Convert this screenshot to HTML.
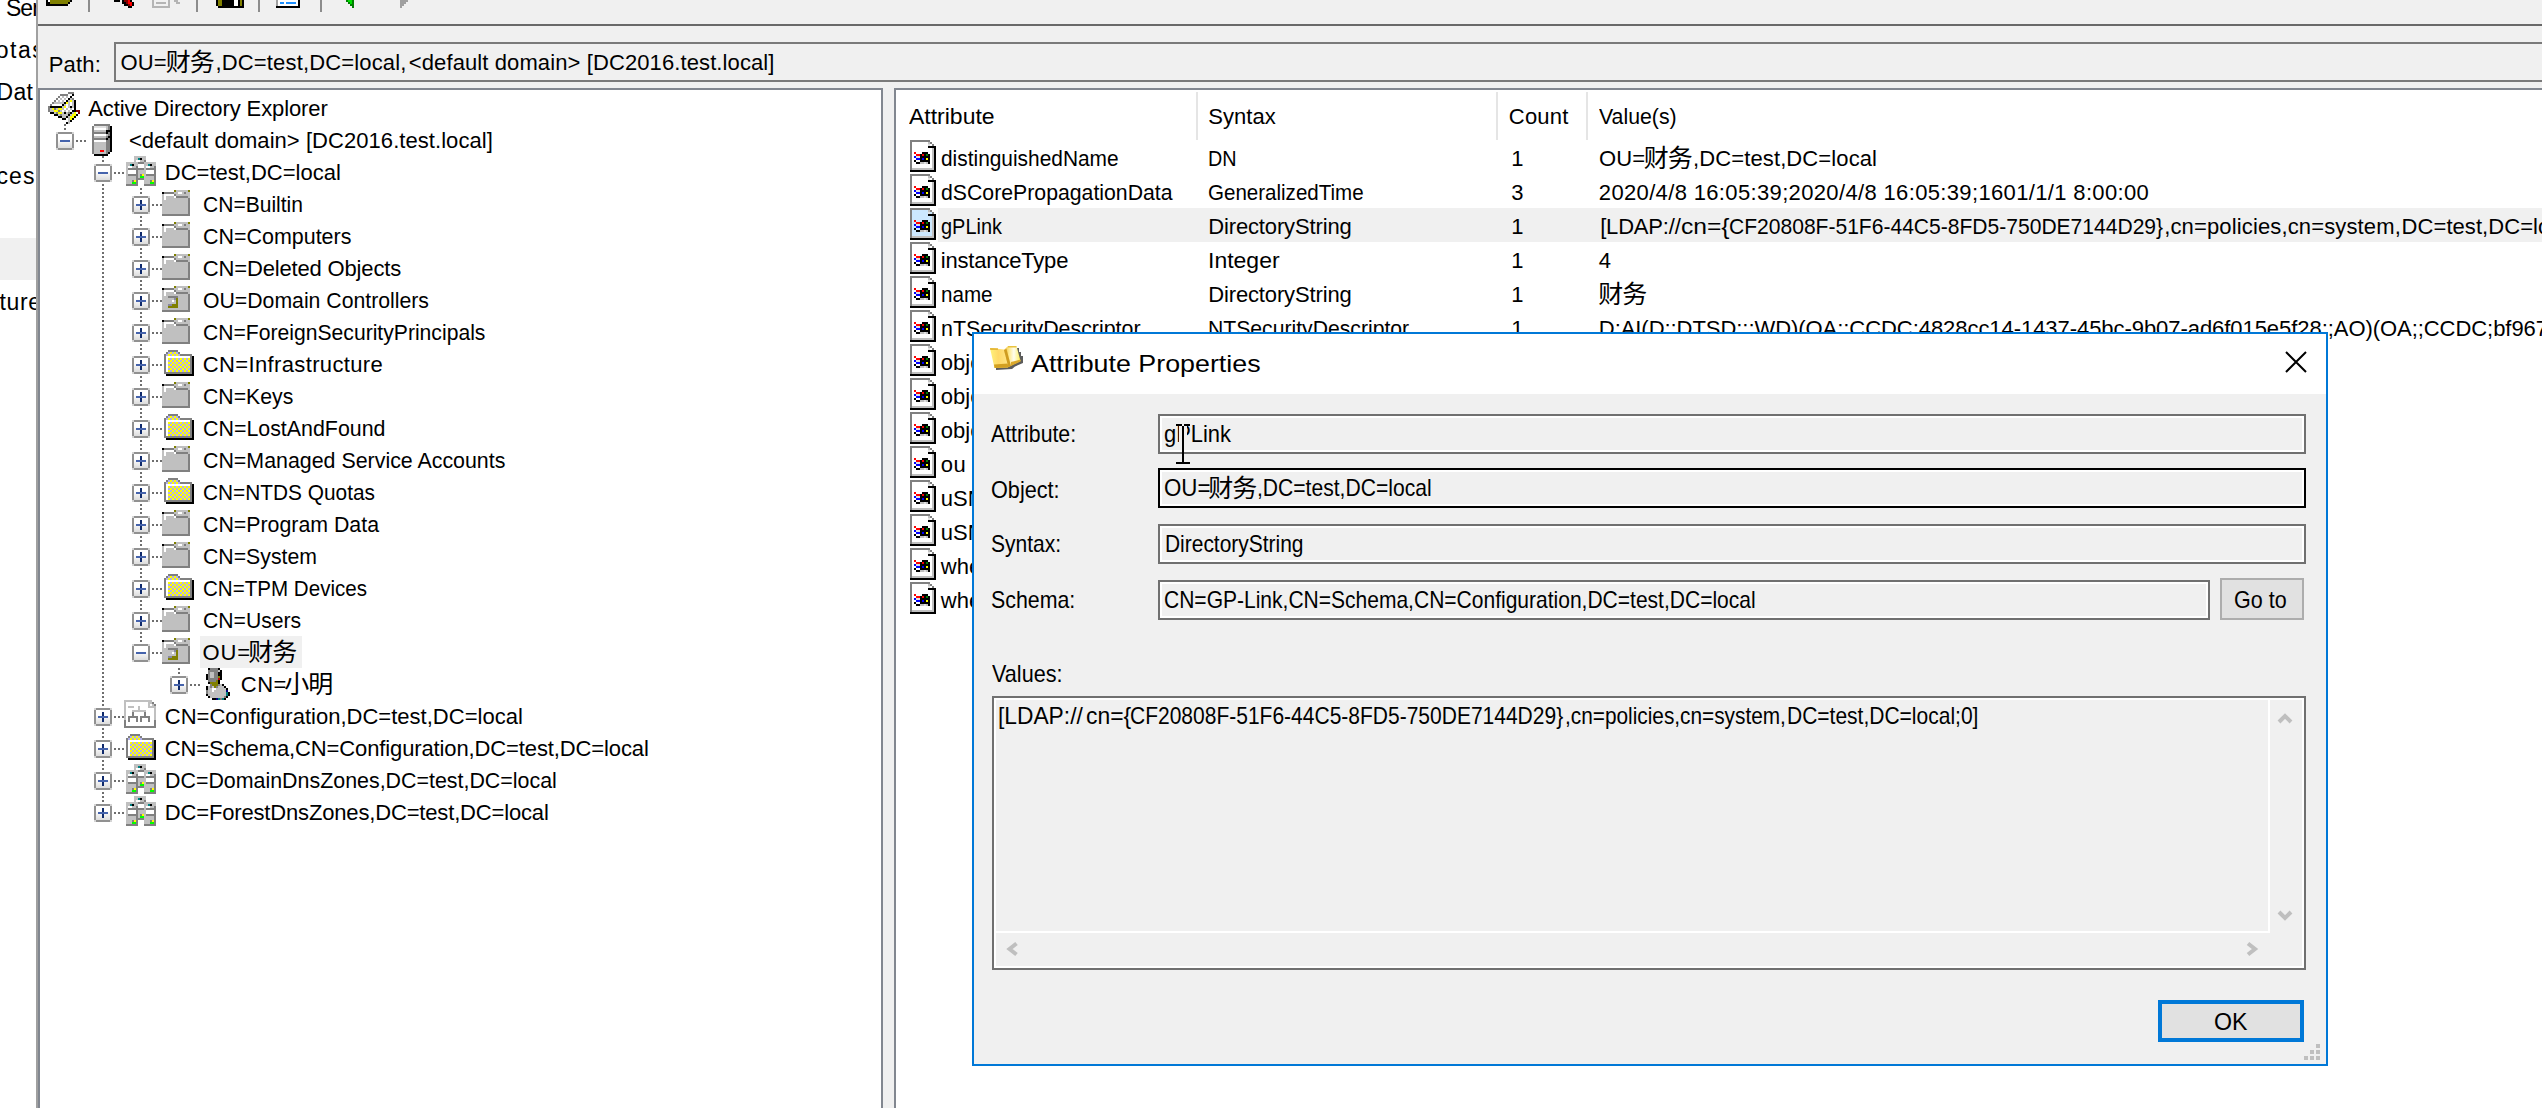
<!DOCTYPE html><html><head><meta charset="utf-8"><title>Active Directory Explorer</title><style>
html,body{margin:0;padding:0}
body{width:2542px;height:1108px;overflow:hidden;background:#fff;position:relative;font-family:'Liberation Sans','Noto Sans CJK SC',sans-serif;font-size:22px;color:#000}
.cj{font-family:'Liberation Sans','Noto Sans CJK SC',sans-serif;font-size:25px;letter-spacing:-1px}
.t{position:absolute;white-space:pre;line-height:32px;height:32px;transform-origin:0 0}
.ic{position:absolute;shape-rendering:crispEdges}
.ab{position:absolute}
.bx{position:absolute;width:14px;height:14px;border:2px solid #919191;background:linear-gradient(#fff,#fff 35%,#dcdcdc);box-sizing:content-box}
.bx i{position:absolute;display:block}
.bx .h{left:2px;top:6px;width:10px;height:2px;background:#4563ac}
.bx .v{left:6px;top:2px;width:2px;height:10px;background:#0f2a6b}
.bx .c{width:2px;height:2px;background:#d4d4d4}
.vd{position:absolute;width:2px;background:repeating-linear-gradient(to bottom,#6e6e6e 0,#6e6e6e 2px,transparent 2px,transparent 4px)}
.hd{position:absolute;height:2px;background:repeating-linear-gradient(to right,#6e6e6e 0,#6e6e6e 2px,transparent 2px,transparent 4px)}
.fld{position:absolute;box-sizing:border-box;border:2px solid #707070;background:#f0f0f0;box-shadow:inset 0 0 0 2px #fff}
</style></head><body>
<svg width="0" height="0" style="position:absolute"><defs><symbol id="i-adexp" viewBox="0 0 32 32"><rect x="20" y="0" width="6" height="2" fill="#808080"/><rect x="12" y="2" width="8" height="2" fill="#808080"/><rect x="20" y="2" width="4" height="2" fill="#ffffff"/><rect x="24" y="2" width="2" height="2" fill="#000000"/><rect x="10" y="4" width="2" height="2" fill="#808080"/><rect x="12" y="4" width="2" height="2" fill="#ffffff"/><rect x="14" y="4" width="2" height="2" fill="#c0c0c0"/><rect x="16" y="4" width="2" height="2" fill="#ffffff"/><rect x="18" y="4" width="2" height="2" fill="#c0c0c0"/><rect x="20" y="4" width="2" height="2" fill="#ffffff"/><rect x="22" y="4" width="2" height="2" fill="#000000"/><rect x="8" y="6" width="2" height="2" fill="#808080"/><rect x="10" y="6" width="2" height="2" fill="#ffffff"/><rect x="12" y="6" width="2" height="2" fill="#c0c0c0"/><rect x="14" y="6" width="2" height="2" fill="#ffffff"/><rect x="16" y="6" width="2" height="2" fill="#c0c0c0"/><rect x="18" y="6" width="2" height="2" fill="#ffffff"/><rect x="20" y="6" width="2" height="2" fill="#000000"/><rect x="22" y="6" width="2" height="2" fill="#c0c0c0"/><rect x="24" y="6" width="2" height="2" fill="#808080"/><rect x="6" y="8" width="2" height="2" fill="#808080"/><rect x="8" y="8" width="2" height="2" fill="#ffffff"/><rect x="10" y="8" width="2" height="2" fill="#c0c0c0"/><rect x="12" y="8" width="2" height="2" fill="#ffffff"/><rect x="14" y="8" width="2" height="2" fill="#c0c0c0"/><rect x="16" y="8" width="2" height="2" fill="#ffffff"/><rect x="18" y="8" width="2" height="2" fill="#000000"/><rect x="20" y="8" width="2" height="2" fill="#c0c0c0"/><rect x="22" y="8" width="2" height="2" fill="#ffff00"/><rect x="24" y="8" width="2" height="2" fill="#c0c0c0"/><rect x="26" y="8" width="2" height="2" fill="#000000"/><rect x="4" y="10" width="2" height="2" fill="#808080"/><rect x="6" y="10" width="10" height="2" fill="#c0c0c0"/><rect x="16" y="10" width="2" height="2" fill="#000000"/><rect x="18" y="10" width="2" height="2" fill="#ffff00"/><rect x="20" y="10" width="2" height="2" fill="#c0c0c0"/><rect x="22" y="10" width="2" height="2" fill="#ffffff"/><rect x="24" y="10" width="2" height="2" fill="#c0c0c0"/><rect x="26" y="10" width="2" height="2" fill="#000000"/><rect x="2" y="12" width="2" height="2" fill="#808080"/><rect x="4" y="12" width="10" height="2" fill="#ffffff"/><rect x="14" y="12" width="2" height="2" fill="#000000"/><rect x="16" y="12" width="2" height="2" fill="#c0c0c0"/><rect x="18" y="12" width="2" height="2" fill="#ffffff"/><rect x="20" y="12" width="2" height="2" fill="#c0c0c0"/><rect x="22" y="12" width="2" height="2" fill="#ffffff"/><rect x="24" y="12" width="2" height="2" fill="#c0c0c0"/><rect x="26" y="12" width="2" height="2" fill="#000000"/><rect x="0" y="14" width="2" height="2" fill="#808080"/><rect x="2" y="14" width="12" height="2" fill="#000000"/><rect x="14" y="14" width="2" height="2" fill="#c0c0c0"/><rect x="16" y="14" width="2" height="2" fill="#ffff00"/><rect x="18" y="14" width="2" height="2" fill="#ffffff"/><rect x="20" y="14" width="2" height="2" fill="#c0c0c0"/><rect x="22" y="14" width="2" height="2" fill="#000000"/><rect x="24" y="14" width="2" height="2" fill="#c0c0c0"/><rect x="26" y="14" width="2" height="2" fill="#000000"/><rect x="0" y="16" width="2" height="2" fill="#808080"/><rect x="2" y="16" width="2" height="2" fill="#c0c0c0"/><rect x="4" y="16" width="2" height="2" fill="#ffff00"/><rect x="6" y="16" width="2" height="2" fill="#808080"/><rect x="8" y="16" width="2" height="2" fill="#c0c0c0"/><rect x="10" y="16" width="4" height="2" fill="#ffff00"/><rect x="14" y="16" width="2" height="2" fill="#c0c0c0"/><rect x="16" y="16" width="2" height="2" fill="#ffffff"/><rect x="18" y="16" width="2" height="2" fill="#c0c0c0"/><rect x="20" y="16" width="2" height="2" fill="#ffffff"/><rect x="22" y="16" width="2" height="2" fill="#c0c0c0"/><rect x="24" y="16" width="2" height="2" fill="#ffffff"/><rect x="26" y="16" width="2" height="2" fill="#000000"/><rect x="0" y="18" width="2" height="2" fill="#808080"/><rect x="2" y="18" width="4" height="2" fill="#c0c0c0"/><rect x="6" y="18" width="4" height="2" fill="#ffff00"/><rect x="10" y="18" width="2" height="2" fill="#808080"/><rect x="12" y="18" width="2" height="2" fill="#c0c0c0"/><rect x="14" y="18" width="2" height="2" fill="#ffffff"/><rect x="16" y="18" width="2" height="2" fill="#c0c0c0"/><rect x="18" y="18" width="2" height="2" fill="#ffffff"/><rect x="20" y="18" width="2" height="2" fill="#c0c0c0"/><rect x="22" y="18" width="2" height="2" fill="#ffffff"/><rect x="24" y="18" width="4" height="2" fill="#000000"/><rect x="28" y="18" width="4" height="2" fill="#800000"/><rect x="2" y="20" width="4" height="2" fill="#000000"/><rect x="6" y="20" width="2" height="2" fill="#c0c0c0"/><rect x="8" y="20" width="2" height="2" fill="#808080"/><rect x="10" y="20" width="4" height="2" fill="#ffff00"/><rect x="14" y="20" width="2" height="2" fill="#c0c0c0"/><rect x="16" y="20" width="2" height="2" fill="#000000"/><rect x="18" y="20" width="2" height="2" fill="#c0c0c0"/><rect x="20" y="20" width="2" height="2" fill="#808080"/><rect x="22" y="20" width="2" height="2" fill="#000000"/><rect x="24" y="20" width="2" height="2" fill="#c0c0c0"/><rect x="26" y="20" width="2" height="2" fill="#ffff00"/><rect x="28" y="20" width="2" height="2" fill="#ffffff"/><rect x="30" y="20" width="2" height="2" fill="#800000"/><rect x="6" y="22" width="4" height="2" fill="#000000"/><rect x="10" y="22" width="2" height="2" fill="#c0c0c0"/><rect x="12" y="22" width="2" height="2" fill="#808080"/><rect x="14" y="22" width="6" height="2" fill="#c0c0c0"/><rect x="20" y="22" width="2" height="2" fill="#000000"/><rect x="22" y="22" width="2" height="2" fill="#c0c0c0"/><rect x="24" y="22" width="4" height="2" fill="#ffff00"/><rect x="28" y="22" width="2" height="2" fill="#000000"/><rect x="10" y="24" width="4" height="2" fill="#000000"/><rect x="14" y="24" width="4" height="2" fill="#c0c0c0"/><rect x="18" y="24" width="2" height="2" fill="#000000"/><rect x="20" y="24" width="2" height="2" fill="#c0c0c0"/><rect x="22" y="24" width="4" height="2" fill="#ffff00"/><rect x="26" y="24" width="2" height="2" fill="#000000"/><rect x="14" y="26" width="4" height="2" fill="#000000"/><rect x="18" y="26" width="2" height="2" fill="#ffffff"/><rect x="20" y="26" width="2" height="2" fill="#c0c0c0"/><rect x="22" y="26" width="2" height="2" fill="#ffff00"/><rect x="24" y="26" width="2" height="2" fill="#000000"/><rect x="18" y="28" width="2" height="2" fill="#ffffff"/><rect x="20" y="28" width="2" height="2" fill="#c0c0c0"/><rect x="22" y="28" width="2" height="2" fill="#000000"/><rect x="18" y="30" width="2" height="2" fill="#000000"/><rect x="20" y="30" width="2" height="2" fill="#c0c0c0"/></symbol><symbol id="i-server" viewBox="0 0 20 32"><rect x="2" y="0" width="16" height="2" fill="#808080"/><rect x="0" y="2" width="2" height="2" fill="#808080"/><rect x="2" y="2" width="12" height="2" fill="#e0e0e0"/><rect x="14" y="2" width="2" height="2" fill="#c0c0c0"/><rect x="16" y="2" width="2" height="2" fill="#808080"/><rect x="18" y="2" width="2" height="2" fill="#000000"/><rect x="0" y="4" width="2" height="2" fill="#808080"/><rect x="2" y="4" width="12" height="2" fill="#ffffff"/><rect x="14" y="4" width="2" height="2" fill="#c0c0c0"/><rect x="16" y="4" width="2" height="2" fill="#808080"/><rect x="18" y="4" width="2" height="2" fill="#000000"/><rect x="0" y="6" width="2" height="2" fill="#808080"/><rect x="2" y="6" width="12" height="2" fill="#c0c0c0"/><rect x="14" y="6" width="6" height="2" fill="#000000"/><rect x="0" y="8" width="14" height="2" fill="#808080"/><rect x="14" y="8" width="2" height="2" fill="#000000"/><rect x="16" y="8" width="2" height="2" fill="#808080"/><rect x="18" y="8" width="2" height="2" fill="#000000"/><rect x="0" y="10" width="2" height="2" fill="#808080"/><rect x="2" y="10" width="12" height="2" fill="#ffffff"/><rect x="14" y="10" width="2" height="2" fill="#c0c0c0"/><rect x="16" y="10" width="2" height="2" fill="#808080"/><rect x="18" y="10" width="2" height="2" fill="#000000"/><rect x="0" y="12" width="2" height="2" fill="#808080"/><rect x="2" y="12" width="12" height="2" fill="#c0c0c0"/><rect x="14" y="12" width="2" height="2" fill="#808080"/><rect x="16" y="12" width="4" height="2" fill="#000000"/><rect x="0" y="14" width="14" height="2" fill="#808080"/><rect x="14" y="14" width="2" height="2" fill="#000000"/><rect x="16" y="14" width="2" height="2" fill="#808080"/><rect x="18" y="14" width="2" height="2" fill="#000000"/><rect x="0" y="16" width="2" height="2" fill="#808080"/><rect x="2" y="16" width="12" height="2" fill="#ffffff"/><rect x="14" y="16" width="4" height="2" fill="#808080"/><rect x="18" y="16" width="2" height="2" fill="#000000"/><rect x="0" y="18" width="2" height="2" fill="#808080"/><rect x="2" y="18" width="12" height="2" fill="#c0c0c0"/><rect x="14" y="18" width="4" height="2" fill="#808080"/><rect x="18" y="18" width="2" height="2" fill="#000000"/><rect x="0" y="20" width="2" height="2" fill="#808080"/><rect x="2" y="20" width="12" height="2" fill="#c0c0c0"/><rect x="14" y="20" width="4" height="2" fill="#808080"/><rect x="18" y="20" width="2" height="2" fill="#000000"/><rect x="0" y="22" width="2" height="2" fill="#808080"/><rect x="2" y="22" width="12" height="2" fill="#c0c0c0"/><rect x="14" y="22" width="4" height="2" fill="#808080"/><rect x="18" y="22" width="2" height="2" fill="#000000"/><rect x="0" y="24" width="2" height="2" fill="#808080"/><rect x="2" y="24" width="12" height="2" fill="#c0c0c0"/><rect x="14" y="24" width="4" height="2" fill="#808080"/><rect x="18" y="24" width="2" height="2" fill="#000000"/><rect x="0" y="26" width="2" height="2" fill="#808080"/><rect x="2" y="26" width="6" height="2" fill="#c0c0c0"/><rect x="8" y="26" width="4" height="2" fill="#ff0000"/><rect x="12" y="26" width="2" height="2" fill="#c0c0c0"/><rect x="14" y="26" width="4" height="2" fill="#808080"/><rect x="18" y="26" width="2" height="2" fill="#000000"/><rect x="0" y="28" width="2" height="2" fill="#808080"/><rect x="2" y="28" width="12" height="2" fill="#c0c0c0"/><rect x="14" y="28" width="2" height="2" fill="#808080"/><rect x="16" y="28" width="2" height="2" fill="#000000"/><rect x="2" y="30" width="14" height="2" fill="#000000"/></symbol><symbol id="i-domain" viewBox="0 0 30 30"><rect x="8" y="0" width="12" height="2" fill="#c0c0c0"/><rect x="8" y="2" width="4" height="2" fill="#c0c0c0"/><rect x="12" y="2" width="2" height="2" fill="#008080"/><rect x="14" y="2" width="2" height="2" fill="#000000"/><rect x="16" y="2" width="4" height="2" fill="#c0c0c0"/><rect x="8" y="4" width="2" height="2" fill="#c0c0c0"/><rect x="10" y="4" width="4" height="2" fill="#ffffff"/><rect x="14" y="4" width="4" height="2" fill="#c0c0c0"/><rect x="18" y="4" width="2" height="2" fill="#808080"/><rect x="0" y="6" width="12" height="2" fill="#c0c0c0"/><rect x="12" y="6" width="6" height="2" fill="#808080"/><rect x="18" y="6" width="12" height="2" fill="#c0c0c0"/><rect x="0" y="8" width="4" height="2" fill="#c0c0c0"/><rect x="4" y="8" width="2" height="2" fill="#008080"/><rect x="6" y="8" width="2" height="2" fill="#000000"/><rect x="8" y="8" width="4" height="2" fill="#c0c0c0"/><rect x="12" y="8" width="6" height="2" fill="#ffffff"/><rect x="18" y="8" width="4" height="2" fill="#c0c0c0"/><rect x="22" y="8" width="2" height="2" fill="#008080"/><rect x="24" y="8" width="2" height="2" fill="#000000"/><rect x="26" y="8" width="4" height="2" fill="#c0c0c0"/><rect x="0" y="10" width="2" height="2" fill="#c0c0c0"/><rect x="2" y="10" width="4" height="2" fill="#ffffff"/><rect x="6" y="10" width="4" height="2" fill="#c0c0c0"/><rect x="10" y="10" width="2" height="2" fill="#808080"/><rect x="12" y="10" width="6" height="2" fill="#ffffff"/><rect x="18" y="10" width="2" height="2" fill="#c0c0c0"/><rect x="20" y="10" width="4" height="2" fill="#ffffff"/><rect x="24" y="10" width="4" height="2" fill="#c0c0c0"/><rect x="28" y="10" width="2" height="2" fill="#808080"/><rect x="0" y="12" width="2" height="2" fill="#c0c0c0"/><rect x="2" y="12" width="16" height="2" fill="#808080"/><rect x="18" y="12" width="2" height="2" fill="#c0c0c0"/><rect x="20" y="12" width="10" height="2" fill="#808080"/><rect x="0" y="14" width="2" height="2" fill="#c0c0c0"/><rect x="2" y="14" width="8" height="2" fill="#ffffff"/><rect x="10" y="14" width="2" height="2" fill="#808080"/><rect x="12" y="14" width="8" height="2" fill="#c0c0c0"/><rect x="20" y="14" width="8" height="2" fill="#ffffff"/><rect x="28" y="14" width="2" height="2" fill="#808080"/><rect x="0" y="16" width="2" height="2" fill="#c0c0c0"/><rect x="2" y="16" width="8" height="2" fill="#ffffff"/><rect x="10" y="16" width="2" height="2" fill="#808080"/><rect x="12" y="16" width="8" height="2" fill="#c0c0c0"/><rect x="20" y="16" width="8" height="2" fill="#ffffff"/><rect x="28" y="16" width="2" height="2" fill="#808080"/><rect x="0" y="18" width="2" height="2" fill="#c0c0c0"/><rect x="2" y="18" width="10" height="2" fill="#808080"/><rect x="12" y="18" width="2" height="2" fill="#c0c0c0"/><rect x="14" y="18" width="2" height="2" fill="#808080"/><rect x="16" y="18" width="2" height="2" fill="#ffff00"/><rect x="18" y="18" width="2" height="2" fill="#c0c0c0"/><rect x="20" y="18" width="10" height="2" fill="#808080"/><rect x="0" y="20" width="10" height="2" fill="#c0c0c0"/><rect x="10" y="20" width="2" height="2" fill="#808080"/><rect x="12" y="20" width="2" height="2" fill="#c0c0c0"/><rect x="14" y="20" width="4" height="2" fill="#00ff00"/><rect x="18" y="20" width="10" height="2" fill="#c0c0c0"/><rect x="28" y="20" width="2" height="2" fill="#808080"/><rect x="0" y="22" width="10" height="2" fill="#c0c0c0"/><rect x="10" y="22" width="8" height="2" fill="#808080"/><rect x="18" y="22" width="10" height="2" fill="#c0c0c0"/><rect x="28" y="22" width="2" height="2" fill="#808080"/><rect x="0" y="24" width="6" height="2" fill="#c0c0c0"/><rect x="6" y="24" width="2" height="2" fill="#808080"/><rect x="8" y="24" width="2" height="2" fill="#ffff00"/><rect x="10" y="24" width="2" height="2" fill="#808080"/><rect x="18" y="24" width="6" height="2" fill="#c0c0c0"/><rect x="24" y="24" width="2" height="2" fill="#808080"/><rect x="26" y="24" width="2" height="2" fill="#ffff00"/><rect x="28" y="24" width="2" height="2" fill="#808080"/><rect x="0" y="26" width="6" height="2" fill="#c0c0c0"/><rect x="6" y="26" width="4" height="2" fill="#00ff00"/><rect x="10" y="26" width="2" height="2" fill="#808080"/><rect x="18" y="26" width="6" height="2" fill="#c0c0c0"/><rect x="24" y="26" width="4" height="2" fill="#00ff00"/><rect x="28" y="26" width="2" height="2" fill="#808080"/><rect x="0" y="28" width="12" height="2" fill="#808080"/><rect x="18" y="28" width="12" height="2" fill="#808080"/></symbol><symbol id="i-gfolder" viewBox="0 0 28 26"><rect x="12" y="0" width="2" height="2" fill="#808000"/><rect x="14" y="0" width="12" height="2" fill="#c0c0c0"/><rect x="26" y="0" width="2" height="2" fill="#808000"/><rect x="0" y="2" width="2" height="2" fill="#000000"/><rect x="2" y="2" width="10" height="2" fill="#808080"/><rect x="12" y="2" width="4" height="2" fill="#c0c0c0"/><rect x="16" y="2" width="4" height="2" fill="#ffffff"/><rect x="20" y="2" width="2" height="2" fill="#c0c0c0"/><rect x="22" y="2" width="2" height="2" fill="#808080"/><rect x="24" y="2" width="4" height="2" fill="#c0c0c0"/><rect x="0" y="4" width="2" height="2" fill="#c0c0c0"/><rect x="2" y="4" width="10" height="2" fill="#ffffff"/><rect x="12" y="4" width="2" height="2" fill="#808080"/><rect x="14" y="4" width="14" height="2" fill="#c0c0c0"/><rect x="0" y="6" width="2" height="2" fill="#c0c0c0"/><rect x="2" y="6" width="2" height="2" fill="#ffffff"/><rect x="4" y="6" width="8" height="2" fill="#c0c0c0"/><rect x="12" y="6" width="2" height="2" fill="#ffffff"/><rect x="14" y="6" width="12" height="2" fill="#808080"/><rect x="26" y="6" width="2" height="2" fill="#c0c0c0"/><rect x="0" y="8" width="2" height="2" fill="#c0c0c0"/><rect x="2" y="8" width="2" height="2" fill="#ffffff"/><rect x="4" y="8" width="22" height="2" fill="#c0c0c0"/><rect x="26" y="8" width="2" height="2" fill="#808080"/><rect x="0" y="10" width="26" height="2" fill="#c0c0c0"/><rect x="26" y="10" width="2" height="2" fill="#808080"/><rect x="0" y="12" width="26" height="2" fill="#c0c0c0"/><rect x="26" y="12" width="2" height="2" fill="#808080"/><rect x="0" y="14" width="26" height="2" fill="#c0c0c0"/><rect x="26" y="14" width="2" height="2" fill="#808080"/><rect x="0" y="16" width="26" height="2" fill="#c0c0c0"/><rect x="26" y="16" width="2" height="2" fill="#808080"/><rect x="0" y="18" width="26" height="2" fill="#c0c0c0"/><rect x="26" y="18" width="2" height="2" fill="#808080"/><rect x="0" y="20" width="26" height="2" fill="#c0c0c0"/><rect x="26" y="20" width="2" height="2" fill="#808080"/><rect x="0" y="22" width="26" height="2" fill="#c0c0c0"/><rect x="26" y="22" width="2" height="2" fill="#808080"/><rect x="0" y="24" width="28" height="2" fill="#808080"/></symbol><symbol id="i-ou" viewBox="0 0 28 26"><rect x="12" y="0" width="2" height="2" fill="#808000"/><rect x="14" y="0" width="12" height="2" fill="#c0c0c0"/><rect x="26" y="0" width="2" height="2" fill="#808000"/><rect x="0" y="2" width="2" height="2" fill="#000000"/><rect x="2" y="2" width="10" height="2" fill="#808080"/><rect x="12" y="2" width="4" height="2" fill="#c0c0c0"/><rect x="16" y="2" width="4" height="2" fill="#ffffff"/><rect x="20" y="2" width="2" height="2" fill="#c0c0c0"/><rect x="22" y="2" width="2" height="2" fill="#808080"/><rect x="24" y="2" width="4" height="2" fill="#c0c0c0"/><rect x="0" y="4" width="2" height="2" fill="#c0c0c0"/><rect x="2" y="4" width="10" height="2" fill="#ffffff"/><rect x="12" y="4" width="2" height="2" fill="#808080"/><rect x="14" y="4" width="14" height="2" fill="#c0c0c0"/><rect x="0" y="6" width="2" height="2" fill="#c0c0c0"/><rect x="2" y="6" width="2" height="2" fill="#ffffff"/><rect x="4" y="6" width="8" height="2" fill="#c0c0c0"/><rect x="12" y="6" width="2" height="2" fill="#ffffff"/><rect x="14" y="6" width="12" height="2" fill="#808080"/><rect x="26" y="6" width="2" height="2" fill="#c0c0c0"/><rect x="0" y="8" width="2" height="2" fill="#c0c0c0"/><rect x="2" y="8" width="2" height="2" fill="#ffffff"/><rect x="4" y="8" width="22" height="2" fill="#c0c0c0"/><rect x="26" y="8" width="2" height="2" fill="#808080"/><rect x="0" y="10" width="6" height="2" fill="#c0c0c0"/><rect x="6" y="10" width="10" height="2" fill="#808080"/><rect x="16" y="10" width="10" height="2" fill="#c0c0c0"/><rect x="26" y="10" width="2" height="2" fill="#808080"/><rect x="0" y="12" width="12" height="2" fill="#c0c0c0"/><rect x="12" y="12" width="2" height="2" fill="#8888a0"/><rect x="14" y="12" width="2" height="2" fill="#808000"/><rect x="16" y="12" width="10" height="2" fill="#c0c0c0"/><rect x="26" y="12" width="2" height="2" fill="#808080"/><rect x="0" y="14" width="10" height="2" fill="#c0c0c0"/><rect x="10" y="14" width="2" height="2" fill="#ffffff"/><rect x="12" y="14" width="2" height="2" fill="#c0c0c0"/><rect x="14" y="14" width="2" height="2" fill="#808000"/><rect x="16" y="14" width="10" height="2" fill="#c0c0c0"/><rect x="26" y="14" width="2" height="2" fill="#808080"/><rect x="0" y="16" width="14" height="2" fill="#c0c0c0"/><rect x="14" y="16" width="2" height="2" fill="#808000"/><rect x="16" y="16" width="10" height="2" fill="#c0c0c0"/><rect x="26" y="16" width="2" height="2" fill="#808080"/><rect x="0" y="18" width="6" height="2" fill="#c0c0c0"/><rect x="6" y="18" width="4" height="2" fill="#8888a0"/><rect x="10" y="18" width="6" height="2" fill="#808000"/><rect x="16" y="18" width="10" height="2" fill="#c0c0c0"/><rect x="26" y="18" width="2" height="2" fill="#808080"/><rect x="0" y="20" width="6" height="2" fill="#c0c0c0"/><rect x="6" y="20" width="10" height="2" fill="#808000"/><rect x="16" y="20" width="10" height="2" fill="#c0c0c0"/><rect x="26" y="20" width="2" height="2" fill="#808080"/><rect x="0" y="22" width="26" height="2" fill="#c0c0c0"/><rect x="26" y="22" width="2" height="2" fill="#808080"/><rect x="0" y="24" width="28" height="2" fill="#808080"/></symbol><symbol id="i-yfolder" viewBox="0 0 30 26"><rect x="4" y="0" width="10" height="2" fill="#808080"/><rect x="2" y="2" width="2" height="2" fill="#808080"/><rect x="4" y="2" width="2" height="2" fill="#b0b0ee"/><rect x="6" y="2" width="2" height="2" fill="#ffff00"/><rect x="8" y="2" width="2" height="2" fill="#b0b0ee"/><rect x="10" y="2" width="2" height="2" fill="#ffff00"/><rect x="12" y="2" width="2" height="2" fill="#b0b0ee"/><rect x="14" y="2" width="2" height="2" fill="#808080"/><rect x="0" y="4" width="2" height="2" fill="#808080"/><rect x="2" y="4" width="2" height="2" fill="#b0b0ee"/><rect x="4" y="4" width="2" height="2" fill="#ffff00"/><rect x="6" y="4" width="2" height="2" fill="#b0b0ee"/><rect x="8" y="4" width="2" height="2" fill="#ffff00"/><rect x="10" y="4" width="2" height="2" fill="#b0b0ee"/><rect x="12" y="4" width="2" height="2" fill="#ffff00"/><rect x="14" y="4" width="2" height="2" fill="#b0b0ee"/><rect x="16" y="4" width="12" height="2" fill="#808080"/><rect x="0" y="6" width="2" height="2" fill="#808080"/><rect x="2" y="6" width="24" height="2" fill="#ffffff"/><rect x="26" y="6" width="2" height="2" fill="#808080"/><rect x="28" y="6" width="2" height="2" fill="#000000"/><rect x="0" y="8" width="2" height="2" fill="#808080"/><rect x="2" y="8" width="2" height="2" fill="#ffffff"/><rect x="4" y="8" width="2" height="2" fill="#ffff00"/><rect x="6" y="8" width="2" height="2" fill="#b0b0ee"/><rect x="8" y="8" width="2" height="2" fill="#ffff00"/><rect x="10" y="8" width="2" height="2" fill="#b0b0ee"/><rect x="12" y="8" width="2" height="2" fill="#ffff00"/><rect x="14" y="8" width="2" height="2" fill="#b0b0ee"/><rect x="16" y="8" width="2" height="2" fill="#ffff00"/><rect x="18" y="8" width="2" height="2" fill="#b0b0ee"/><rect x="20" y="8" width="2" height="2" fill="#ffff00"/><rect x="22" y="8" width="2" height="2" fill="#b0b0ee"/><rect x="24" y="8" width="2" height="2" fill="#ffff00"/><rect x="26" y="8" width="2" height="2" fill="#808080"/><rect x="28" y="8" width="2" height="2" fill="#000000"/><rect x="0" y="10" width="2" height="2" fill="#808080"/><rect x="2" y="10" width="2" height="2" fill="#ffffff"/><rect x="4" y="10" width="2" height="2" fill="#b0b0ee"/><rect x="6" y="10" width="2" height="2" fill="#ffff00"/><rect x="8" y="10" width="2" height="2" fill="#b0b0ee"/><rect x="10" y="10" width="2" height="2" fill="#ffff00"/><rect x="12" y="10" width="2" height="2" fill="#b0b0ee"/><rect x="14" y="10" width="2" height="2" fill="#ffff00"/><rect x="16" y="10" width="2" height="2" fill="#b0b0ee"/><rect x="18" y="10" width="2" height="2" fill="#ffff00"/><rect x="20" y="10" width="2" height="2" fill="#b0b0ee"/><rect x="22" y="10" width="2" height="2" fill="#ffff00"/><rect x="24" y="10" width="2" height="2" fill="#b0b0ee"/><rect x="26" y="10" width="2" height="2" fill="#808080"/><rect x="28" y="10" width="2" height="2" fill="#000000"/><rect x="0" y="12" width="2" height="2" fill="#808080"/><rect x="2" y="12" width="2" height="2" fill="#ffffff"/><rect x="4" y="12" width="2" height="2" fill="#ffff00"/><rect x="6" y="12" width="2" height="2" fill="#b0b0ee"/><rect x="8" y="12" width="2" height="2" fill="#ffff00"/><rect x="10" y="12" width="2" height="2" fill="#b0b0ee"/><rect x="12" y="12" width="2" height="2" fill="#ffff00"/><rect x="14" y="12" width="2" height="2" fill="#b0b0ee"/><rect x="16" y="12" width="2" height="2" fill="#ffff00"/><rect x="18" y="12" width="2" height="2" fill="#b0b0ee"/><rect x="20" y="12" width="2" height="2" fill="#ffff00"/><rect x="22" y="12" width="2" height="2" fill="#b0b0ee"/><rect x="24" y="12" width="2" height="2" fill="#ffff00"/><rect x="26" y="12" width="2" height="2" fill="#808080"/><rect x="28" y="12" width="2" height="2" fill="#000000"/><rect x="0" y="14" width="2" height="2" fill="#808080"/><rect x="2" y="14" width="2" height="2" fill="#ffffff"/><rect x="4" y="14" width="2" height="2" fill="#b0b0ee"/><rect x="6" y="14" width="2" height="2" fill="#ffff00"/><rect x="8" y="14" width="2" height="2" fill="#b0b0ee"/><rect x="10" y="14" width="2" height="2" fill="#ffff00"/><rect x="12" y="14" width="2" height="2" fill="#b0b0ee"/><rect x="14" y="14" width="2" height="2" fill="#ffff00"/><rect x="16" y="14" width="2" height="2" fill="#b0b0ee"/><rect x="18" y="14" width="2" height="2" fill="#ffff00"/><rect x="20" y="14" width="2" height="2" fill="#b0b0ee"/><rect x="22" y="14" width="2" height="2" fill="#ffff00"/><rect x="24" y="14" width="2" height="2" fill="#b0b0ee"/><rect x="26" y="14" width="2" height="2" fill="#808080"/><rect x="28" y="14" width="2" height="2" fill="#000000"/><rect x="0" y="16" width="2" height="2" fill="#808080"/><rect x="2" y="16" width="2" height="2" fill="#ffffff"/><rect x="4" y="16" width="2" height="2" fill="#ffff00"/><rect x="6" y="16" width="2" height="2" fill="#b0b0ee"/><rect x="8" y="16" width="2" height="2" fill="#ffff00"/><rect x="10" y="16" width="2" height="2" fill="#b0b0ee"/><rect x="12" y="16" width="2" height="2" fill="#ffff00"/><rect x="14" y="16" width="2" height="2" fill="#b0b0ee"/><rect x="16" y="16" width="2" height="2" fill="#ffff00"/><rect x="18" y="16" width="2" height="2" fill="#b0b0ee"/><rect x="20" y="16" width="2" height="2" fill="#ffff00"/><rect x="22" y="16" width="2" height="2" fill="#b0b0ee"/><rect x="24" y="16" width="2" height="2" fill="#ffff00"/><rect x="26" y="16" width="2" height="2" fill="#808080"/><rect x="28" y="16" width="2" height="2" fill="#000000"/><rect x="0" y="18" width="2" height="2" fill="#808080"/><rect x="2" y="18" width="2" height="2" fill="#ffffff"/><rect x="4" y="18" width="2" height="2" fill="#b0b0ee"/><rect x="6" y="18" width="2" height="2" fill="#ffff00"/><rect x="8" y="18" width="2" height="2" fill="#b0b0ee"/><rect x="10" y="18" width="2" height="2" fill="#ffff00"/><rect x="12" y="18" width="2" height="2" fill="#b0b0ee"/><rect x="14" y="18" width="2" height="2" fill="#ffff00"/><rect x="16" y="18" width="2" height="2" fill="#b0b0ee"/><rect x="18" y="18" width="2" height="2" fill="#ffff00"/><rect x="20" y="18" width="2" height="2" fill="#b0b0ee"/><rect x="22" y="18" width="2" height="2" fill="#ffff00"/><rect x="24" y="18" width="2" height="2" fill="#b0b0ee"/><rect x="26" y="18" width="2" height="2" fill="#808080"/><rect x="28" y="18" width="2" height="2" fill="#000000"/><rect x="0" y="20" width="2" height="2" fill="#808080"/><rect x="2" y="20" width="2" height="2" fill="#ffffff"/><rect x="4" y="20" width="2" height="2" fill="#ffff00"/><rect x="6" y="20" width="2" height="2" fill="#b0b0ee"/><rect x="8" y="20" width="2" height="2" fill="#ffff00"/><rect x="10" y="20" width="2" height="2" fill="#b0b0ee"/><rect x="12" y="20" width="2" height="2" fill="#ffff00"/><rect x="14" y="20" width="2" height="2" fill="#b0b0ee"/><rect x="16" y="20" width="2" height="2" fill="#ffff00"/><rect x="18" y="20" width="2" height="2" fill="#b0b0ee"/><rect x="20" y="20" width="2" height="2" fill="#ffff00"/><rect x="22" y="20" width="2" height="2" fill="#b0b0ee"/><rect x="24" y="20" width="2" height="2" fill="#ffff00"/><rect x="26" y="20" width="2" height="2" fill="#808080"/><rect x="28" y="20" width="2" height="2" fill="#000000"/><rect x="0" y="22" width="28" height="2" fill="#808080"/><rect x="28" y="22" width="2" height="2" fill="#000000"/><rect x="2" y="24" width="28" height="2" fill="#000000"/></symbol><symbol id="i-user" viewBox="0 0 24 32"><rect x="2" y="0" width="2" height="2" fill="#000000"/><rect x="4" y="0" width="8" height="2" fill="#808080"/><rect x="12" y="0" width="2" height="2" fill="#000000"/><rect x="2" y="2" width="10" height="2" fill="#808080"/><rect x="12" y="2" width="2" height="2" fill="#c0c0c0"/><rect x="14" y="2" width="2" height="2" fill="#000000"/><rect x="2" y="4" width="2" height="2" fill="#808080"/><rect x="4" y="4" width="4" height="2" fill="#c0c0c0"/><rect x="8" y="4" width="4" height="2" fill="#808080"/><rect x="12" y="4" width="4" height="2" fill="#000000"/><rect x="0" y="6" width="2" height="2" fill="#000000"/><rect x="2" y="6" width="2" height="2" fill="#808080"/><rect x="4" y="6" width="4" height="2" fill="#c0c0c0"/><rect x="8" y="6" width="4" height="2" fill="#808080"/><rect x="12" y="6" width="4" height="2" fill="#000000"/><rect x="0" y="8" width="2" height="2" fill="#000000"/><rect x="2" y="8" width="2" height="2" fill="#808080"/><rect x="4" y="8" width="4" height="2" fill="#c0c0c0"/><rect x="8" y="8" width="4" height="2" fill="#808080"/><rect x="12" y="8" width="2" height="2" fill="#808000"/><rect x="14" y="8" width="2" height="2" fill="#000000"/><rect x="0" y="10" width="2" height="2" fill="#000000"/><rect x="2" y="10" width="10" height="2" fill="#808080"/><rect x="12" y="10" width="2" height="2" fill="#c00000"/><rect x="14" y="10" width="2" height="2" fill="#000000"/><rect x="2" y="12" width="8" height="2" fill="#808080"/><rect x="10" y="12" width="2" height="2" fill="#808000"/><rect x="12" y="12" width="2" height="2" fill="#000000"/><rect x="2" y="14" width="2" height="2" fill="#000000"/><rect x="4" y="14" width="8" height="2" fill="#808000"/><rect x="12" y="14" width="2" height="2" fill="#000000"/><rect x="4" y="16" width="2" height="2" fill="#808080"/><rect x="6" y="16" width="6" height="2" fill="#808000"/><rect x="12" y="16" width="2" height="2" fill="#808080"/><rect x="14" y="16" width="2" height="2" fill="#c0c0c0"/><rect x="16" y="16" width="2" height="2" fill="#000000"/><rect x="0" y="18" width="2" height="2" fill="#000000"/><rect x="2" y="18" width="2" height="2" fill="#c0c0c0"/><rect x="4" y="18" width="2" height="2" fill="#808080"/><rect x="6" y="18" width="2" height="2" fill="#c0c0c0"/><rect x="8" y="18" width="2" height="2" fill="#808000"/><rect x="10" y="18" width="2" height="2" fill="#808080"/><rect x="12" y="18" width="6" height="2" fill="#c0c0c0"/><rect x="18" y="18" width="2" height="2" fill="#000000"/><rect x="0" y="20" width="2" height="2" fill="#000000"/><rect x="2" y="20" width="4" height="2" fill="#c0c0c0"/><rect x="6" y="20" width="4" height="2" fill="#ffffff"/><rect x="10" y="20" width="10" height="2" fill="#c0c0c0"/><rect x="20" y="20" width="2" height="2" fill="#000000"/><rect x="0" y="22" width="2" height="2" fill="#808080"/><rect x="2" y="22" width="4" height="2" fill="#c0c0c0"/><rect x="6" y="22" width="2" height="2" fill="#ffffff"/><rect x="8" y="22" width="12" height="2" fill="#c0c0c0"/><rect x="20" y="22" width="2" height="2" fill="#000080"/><rect x="0" y="24" width="2" height="2" fill="#808080"/><rect x="2" y="24" width="18" height="2" fill="#c0c0c0"/><rect x="20" y="24" width="2" height="2" fill="#008080"/><rect x="22" y="24" width="2" height="2" fill="#000000"/><rect x="0" y="26" width="2" height="2" fill="#000000"/><rect x="2" y="26" width="18" height="2" fill="#c0c0c0"/><rect x="20" y="26" width="2" height="2" fill="#008080"/><rect x="22" y="26" width="2" height="2" fill="#000000"/><rect x="2" y="28" width="2" height="2" fill="#000000"/><rect x="4" y="28" width="14" height="2" fill="#c0c0c0"/><rect x="18" y="28" width="2" height="2" fill="#808080"/><rect x="20" y="28" width="2" height="2" fill="#000000"/><rect x="6" y="30" width="4" height="2" fill="#000000"/><rect x="10" y="30" width="2" height="2" fill="#000080"/><rect x="12" y="30" width="2" height="2" fill="#008080"/><rect x="14" y="30" width="2" height="2" fill="#808080"/><rect x="16" y="30" width="2" height="2" fill="#008080"/><rect x="18" y="30" width="2" height="2" fill="#000000"/></symbol><symbol id="i-config" viewBox="0 0 32 28"><rect x="0" y="0" width="28" height="2" fill="#c0c0c0"/><rect x="0" y="2" width="2" height="2" fill="#c0c0c0"/><rect x="2" y="2" width="22" height="2" fill="#ffffff"/><rect x="24" y="2" width="4" height="2" fill="#c0c0c0"/><rect x="28" y="2" width="2" height="2" fill="#808080"/><rect x="0" y="4" width="2" height="2" fill="#c0c0c0"/><rect x="2" y="4" width="22" height="2" fill="#ffffff"/><rect x="24" y="4" width="2" height="2" fill="#c0c0c0"/><rect x="26" y="4" width="2" height="2" fill="#ffffff"/><rect x="28" y="4" width="2" height="2" fill="#c0c0c0"/><rect x="30" y="4" width="2" height="2" fill="#808080"/><rect x="0" y="6" width="2" height="2" fill="#c0c0c0"/><rect x="2" y="6" width="2" height="2" fill="#ffffff"/><rect x="4" y="6" width="6" height="2" fill="#c0c0c0"/><rect x="10" y="6" width="4" height="2" fill="#ffffff"/><rect x="14" y="6" width="2" height="2" fill="#c0c0c0"/><rect x="16" y="6" width="8" height="2" fill="#ffffff"/><rect x="24" y="6" width="8" height="2" fill="#c0c0c0"/><rect x="0" y="8" width="2" height="2" fill="#c0c0c0"/><rect x="2" y="8" width="12" height="2" fill="#ffffff"/><rect x="14" y="8" width="2" height="2" fill="#c0c0c0"/><rect x="16" y="8" width="14" height="2" fill="#ffffff"/><rect x="30" y="8" width="2" height="2" fill="#c0c0c0"/><rect x="0" y="10" width="2" height="2" fill="#c0c0c0"/><rect x="2" y="10" width="6" height="2" fill="#ffffff"/><rect x="8" y="10" width="14" height="2" fill="#c0c0c0"/><rect x="22" y="10" width="8" height="2" fill="#ffffff"/><rect x="30" y="10" width="2" height="2" fill="#c0c0c0"/><rect x="0" y="12" width="2" height="2" fill="#c0c0c0"/><rect x="2" y="12" width="6" height="2" fill="#ffffff"/><rect x="8" y="12" width="2" height="2" fill="#808080"/><rect x="10" y="12" width="10" height="2" fill="#ffffff"/><rect x="20" y="12" width="2" height="2" fill="#808080"/><rect x="22" y="12" width="8" height="2" fill="#ffffff"/><rect x="30" y="12" width="2" height="2" fill="#c0c0c0"/><rect x="0" y="14" width="2" height="2" fill="#c0c0c0"/><rect x="2" y="14" width="6" height="2" fill="#ffffff"/><rect x="8" y="14" width="2" height="2" fill="#808080"/><rect x="10" y="14" width="10" height="2" fill="#ffffff"/><rect x="20" y="14" width="2" height="2" fill="#808080"/><rect x="22" y="14" width="8" height="2" fill="#ffffff"/><rect x="30" y="14" width="2" height="2" fill="#c0c0c0"/><rect x="0" y="16" width="2" height="2" fill="#c0c0c0"/><rect x="2" y="16" width="2" height="2" fill="#ffffff"/><rect x="4" y="16" width="10" height="2" fill="#808080"/><rect x="14" y="16" width="2" height="2" fill="#ffffff"/><rect x="16" y="16" width="10" height="2" fill="#808080"/><rect x="26" y="16" width="4" height="2" fill="#ffffff"/><rect x="30" y="16" width="2" height="2" fill="#c0c0c0"/><rect x="0" y="18" width="2" height="2" fill="#c0c0c0"/><rect x="2" y="18" width="2" height="2" fill="#ffffff"/><rect x="4" y="18" width="2" height="2" fill="#808080"/><rect x="6" y="18" width="6" height="2" fill="#ffffff"/><rect x="12" y="18" width="2" height="2" fill="#808080"/><rect x="14" y="18" width="2" height="2" fill="#ffffff"/><rect x="16" y="18" width="2" height="2" fill="#808080"/><rect x="18" y="18" width="6" height="2" fill="#ffffff"/><rect x="24" y="18" width="2" height="2" fill="#808080"/><rect x="26" y="18" width="4" height="2" fill="#ffffff"/><rect x="30" y="18" width="2" height="2" fill="#c0c0c0"/><rect x="0" y="20" width="2" height="2" fill="#808080"/><rect x="2" y="20" width="2" height="2" fill="#ffffff"/><rect x="4" y="20" width="2" height="2" fill="#808080"/><rect x="6" y="20" width="6" height="2" fill="#ffffff"/><rect x="12" y="20" width="2" height="2" fill="#808080"/><rect x="14" y="20" width="2" height="2" fill="#ffffff"/><rect x="16" y="20" width="2" height="2" fill="#808080"/><rect x="18" y="20" width="6" height="2" fill="#ffffff"/><rect x="24" y="20" width="2" height="2" fill="#808080"/><rect x="26" y="20" width="4" height="2" fill="#ffffff"/><rect x="30" y="20" width="2" height="2" fill="#808080"/><rect x="0" y="22" width="2" height="2" fill="#808080"/><rect x="2" y="22" width="28" height="2" fill="#ffffff"/><rect x="30" y="22" width="2" height="2" fill="#808080"/><rect x="0" y="24" width="2" height="2" fill="#808080"/><rect x="2" y="24" width="28" height="2" fill="#ffffff"/><rect x="30" y="24" width="2" height="2" fill="#808080"/><rect x="0" y="26" width="32" height="2" fill="#808080"/></symbol><symbol id="i-attr" viewBox="0 0 26 32"><rect x="0" y="0" width="20" height="2" fill="#808080"/><rect x="0" y="2" width="2" height="2" fill="#808080"/><rect x="2" y="2" width="16" height="2" fill="#ffffff"/><rect x="18" y="2" width="2" height="2" fill="#c0c0c0"/><rect x="20" y="2" width="2" height="2" fill="#808080"/><rect x="0" y="4" width="2" height="2" fill="#808080"/><rect x="2" y="4" width="16" height="2" fill="#ffffff"/><rect x="18" y="4" width="2" height="2" fill="#e0e0e0"/><rect x="20" y="4" width="2" height="2" fill="#ffffff"/><rect x="22" y="4" width="2" height="2" fill="#808080"/><rect x="0" y="6" width="2" height="2" fill="#808080"/><rect x="2" y="6" width="16" height="2" fill="#ffffff"/><rect x="18" y="6" width="8" height="2" fill="#000000"/><rect x="0" y="8" width="2" height="2" fill="#808080"/><rect x="2" y="8" width="20" height="2" fill="#ffffff"/><rect x="22" y="8" width="2" height="2" fill="#c0c0c0"/><rect x="24" y="8" width="2" height="2" fill="#000000"/><rect x="0" y="10" width="2" height="2" fill="#808080"/><rect x="2" y="10" width="20" height="2" fill="#ffffff"/><rect x="22" y="10" width="2" height="2" fill="#c0c0c0"/><rect x="24" y="10" width="2" height="2" fill="#000000"/><rect x="0" y="12" width="2" height="2" fill="#808080"/><rect x="2" y="12" width="2" height="2" fill="#ffffff"/><rect x="4" y="12" width="2" height="2" fill="#ff0000"/><rect x="6" y="12" width="6" height="2" fill="#ffffff"/><rect x="12" y="12" width="6" height="2" fill="#000000"/><rect x="18" y="12" width="4" height="2" fill="#ffffff"/><rect x="22" y="12" width="2" height="2" fill="#c0c0c0"/><rect x="24" y="12" width="2" height="2" fill="#000000"/><rect x="0" y="14" width="2" height="2" fill="#808080"/><rect x="2" y="14" width="4" height="2" fill="#ffffff"/><rect x="6" y="14" width="4" height="2" fill="#ff0000"/><rect x="10" y="14" width="2" height="2" fill="#000000"/><rect x="12" y="14" width="2" height="2" fill="#ff0000"/><rect x="14" y="14" width="2" height="2" fill="#000000"/><rect x="16" y="14" width="2" height="2" fill="#008000"/><rect x="18" y="14" width="2" height="2" fill="#000000"/><rect x="20" y="14" width="2" height="2" fill="#ffffff"/><rect x="22" y="14" width="2" height="2" fill="#c0c0c0"/><rect x="24" y="14" width="2" height="2" fill="#000000"/><rect x="0" y="16" width="2" height="2" fill="#808080"/><rect x="2" y="16" width="2" height="2" fill="#ffffff"/><rect x="4" y="16" width="2" height="2" fill="#0000ff"/><rect x="6" y="16" width="4" height="2" fill="#e0e0e0"/><rect x="10" y="16" width="10" height="2" fill="#000000"/><rect x="20" y="16" width="2" height="2" fill="#ffffff"/><rect x="22" y="16" width="2" height="2" fill="#c0c0c0"/><rect x="24" y="16" width="2" height="2" fill="#000000"/><rect x="0" y="18" width="2" height="2" fill="#808080"/><rect x="2" y="18" width="4" height="2" fill="#ffffff"/><rect x="6" y="18" width="4" height="2" fill="#0000ff"/><rect x="10" y="18" width="2" height="2" fill="#000000"/><rect x="12" y="18" width="2" height="2" fill="#0000ff"/><rect x="14" y="18" width="2" height="2" fill="#000000"/><rect x="16" y="18" width="2" height="2" fill="#ffff00"/><rect x="18" y="18" width="2" height="2" fill="#000000"/><rect x="20" y="18" width="2" height="2" fill="#ffffff"/><rect x="22" y="18" width="2" height="2" fill="#c0c0c0"/><rect x="24" y="18" width="2" height="2" fill="#000000"/><rect x="0" y="20" width="2" height="2" fill="#808080"/><rect x="2" y="20" width="2" height="2" fill="#ffffff"/><rect x="4" y="20" width="2" height="2" fill="#000000"/><rect x="6" y="20" width="4" height="2" fill="#ffffff"/><rect x="10" y="20" width="10" height="2" fill="#000000"/><rect x="20" y="20" width="2" height="2" fill="#ffffff"/><rect x="22" y="20" width="2" height="2" fill="#c0c0c0"/><rect x="24" y="20" width="2" height="2" fill="#000000"/><rect x="0" y="22" width="2" height="2" fill="#808080"/><rect x="2" y="22" width="4" height="2" fill="#ffffff"/><rect x="6" y="22" width="4" height="2" fill="#000000"/><rect x="10" y="22" width="4" height="2" fill="#c0c0c0"/><rect x="14" y="22" width="2" height="2" fill="#e0e0e0"/><rect x="16" y="22" width="2" height="2" fill="#c0c0c0"/><rect x="18" y="22" width="2" height="2" fill="#000000"/><rect x="20" y="22" width="2" height="2" fill="#ffffff"/><rect x="22" y="22" width="2" height="2" fill="#c0c0c0"/><rect x="24" y="22" width="2" height="2" fill="#000000"/><rect x="0" y="24" width="2" height="2" fill="#808080"/><rect x="2" y="24" width="20" height="2" fill="#ffffff"/><rect x="22" y="24" width="2" height="2" fill="#c0c0c0"/><rect x="24" y="24" width="2" height="2" fill="#000000"/><rect x="0" y="26" width="2" height="2" fill="#808080"/><rect x="2" y="26" width="20" height="2" fill="#ffffff"/><rect x="22" y="26" width="2" height="2" fill="#c0c0c0"/><rect x="24" y="26" width="2" height="2" fill="#000000"/><rect x="0" y="28" width="2" height="2" fill="#808080"/><rect x="2" y="28" width="22" height="2" fill="#c0c0c0"/><rect x="24" y="28" width="2" height="2" fill="#000000"/><rect x="0" y="30" width="26" height="2" fill="#000000"/></symbol><symbol id="i-attrsel" viewBox="0 0 26 32"><rect x="0" y="0" width="20" height="2" fill="#808080"/><rect x="0" y="2" width="2" height="2" fill="#808080"/><rect x="2" y="2" width="16" height="2" fill="#cce8ff"/><rect x="18" y="2" width="2" height="2" fill="#c0c0c0"/><rect x="20" y="2" width="2" height="2" fill="#808080"/><rect x="0" y="4" width="2" height="2" fill="#808080"/><rect x="2" y="4" width="16" height="2" fill="#cce8ff"/><rect x="18" y="4" width="2" height="2" fill="#e0e0e0"/><rect x="20" y="4" width="2" height="2" fill="#cce8ff"/><rect x="22" y="4" width="2" height="2" fill="#808080"/><rect x="0" y="6" width="2" height="2" fill="#808080"/><rect x="2" y="6" width="16" height="2" fill="#cce8ff"/><rect x="18" y="6" width="8" height="2" fill="#000000"/><rect x="0" y="8" width="2" height="2" fill="#808080"/><rect x="2" y="8" width="20" height="2" fill="#cce8ff"/><rect x="22" y="8" width="2" height="2" fill="#c0c0c0"/><rect x="24" y="8" width="2" height="2" fill="#000000"/><rect x="0" y="10" width="2" height="2" fill="#808080"/><rect x="2" y="10" width="20" height="2" fill="#cce8ff"/><rect x="22" y="10" width="2" height="2" fill="#c0c0c0"/><rect x="24" y="10" width="2" height="2" fill="#000000"/><rect x="0" y="12" width="2" height="2" fill="#808080"/><rect x="2" y="12" width="2" height="2" fill="#cce8ff"/><rect x="4" y="12" width="2" height="2" fill="#ff0000"/><rect x="6" y="12" width="6" height="2" fill="#cce8ff"/><rect x="12" y="12" width="6" height="2" fill="#000000"/><rect x="18" y="12" width="4" height="2" fill="#cce8ff"/><rect x="22" y="12" width="2" height="2" fill="#c0c0c0"/><rect x="24" y="12" width="2" height="2" fill="#000000"/><rect x="0" y="14" width="2" height="2" fill="#808080"/><rect x="2" y="14" width="4" height="2" fill="#cce8ff"/><rect x="6" y="14" width="4" height="2" fill="#ff0000"/><rect x="10" y="14" width="2" height="2" fill="#000000"/><rect x="12" y="14" width="2" height="2" fill="#ff0000"/><rect x="14" y="14" width="2" height="2" fill="#000000"/><rect x="16" y="14" width="2" height="2" fill="#008000"/><rect x="18" y="14" width="2" height="2" fill="#000000"/><rect x="20" y="14" width="2" height="2" fill="#cce8ff"/><rect x="22" y="14" width="2" height="2" fill="#c0c0c0"/><rect x="24" y="14" width="2" height="2" fill="#000000"/><rect x="0" y="16" width="2" height="2" fill="#808080"/><rect x="2" y="16" width="2" height="2" fill="#cce8ff"/><rect x="4" y="16" width="2" height="2" fill="#0000ff"/><rect x="6" y="16" width="4" height="2" fill="#e0e0e0"/><rect x="10" y="16" width="10" height="2" fill="#000000"/><rect x="20" y="16" width="2" height="2" fill="#cce8ff"/><rect x="22" y="16" width="2" height="2" fill="#c0c0c0"/><rect x="24" y="16" width="2" height="2" fill="#000000"/><rect x="0" y="18" width="2" height="2" fill="#808080"/><rect x="2" y="18" width="4" height="2" fill="#cce8ff"/><rect x="6" y="18" width="4" height="2" fill="#0000ff"/><rect x="10" y="18" width="2" height="2" fill="#000000"/><rect x="12" y="18" width="2" height="2" fill="#0000ff"/><rect x="14" y="18" width="2" height="2" fill="#000000"/><rect x="16" y="18" width="2" height="2" fill="#ffff00"/><rect x="18" y="18" width="2" height="2" fill="#000000"/><rect x="20" y="18" width="2" height="2" fill="#cce8ff"/><rect x="22" y="18" width="2" height="2" fill="#c0c0c0"/><rect x="24" y="18" width="2" height="2" fill="#000000"/><rect x="0" y="20" width="2" height="2" fill="#808080"/><rect x="2" y="20" width="2" height="2" fill="#cce8ff"/><rect x="4" y="20" width="2" height="2" fill="#000000"/><rect x="6" y="20" width="4" height="2" fill="#cce8ff"/><rect x="10" y="20" width="10" height="2" fill="#000000"/><rect x="20" y="20" width="2" height="2" fill="#cce8ff"/><rect x="22" y="20" width="2" height="2" fill="#c0c0c0"/><rect x="24" y="20" width="2" height="2" fill="#000000"/><rect x="0" y="22" width="2" height="2" fill="#808080"/><rect x="2" y="22" width="4" height="2" fill="#cce8ff"/><rect x="6" y="22" width="4" height="2" fill="#000000"/><rect x="10" y="22" width="4" height="2" fill="#c0c0c0"/><rect x="14" y="22" width="2" height="2" fill="#e0e0e0"/><rect x="16" y="22" width="2" height="2" fill="#c0c0c0"/><rect x="18" y="22" width="2" height="2" fill="#000000"/><rect x="20" y="22" width="2" height="2" fill="#cce8ff"/><rect x="22" y="22" width="2" height="2" fill="#c0c0c0"/><rect x="24" y="22" width="2" height="2" fill="#000000"/><rect x="0" y="24" width="2" height="2" fill="#808080"/><rect x="2" y="24" width="20" height="2" fill="#cce8ff"/><rect x="22" y="24" width="2" height="2" fill="#c0c0c0"/><rect x="24" y="24" width="2" height="2" fill="#000000"/><rect x="0" y="26" width="2" height="2" fill="#808080"/><rect x="2" y="26" width="20" height="2" fill="#cce8ff"/><rect x="22" y="26" width="2" height="2" fill="#c0c0c0"/><rect x="24" y="26" width="2" height="2" fill="#000000"/><rect x="0" y="28" width="2" height="2" fill="#808080"/><rect x="2" y="28" width="22" height="2" fill="#c0c0c0"/><rect x="24" y="28" width="2" height="2" fill="#000000"/><rect x="0" y="30" width="26" height="2" fill="#000000"/></symbol></defs></svg>
<div class="ab" id="strip" style="left:0;top:0;width:36px;height:1108px;overflow:hidden;background:#fff">
<div class="ab" style="left:0;top:238px;width:36px;height:42px;background:#f0f0f0"></div>
<span class="t" style="left:6.0px;top:-8px;font-size:23px;letter-spacing:-1px;">Ser</span>
<span class="t" style="left:-4.3px;top:34px;font-size:23px;letter-spacing:1.5px;">otas</span>
<span class="t" style="left:-3.4px;top:76px;font-size:23px;letter-spacing:0.3px;">Dat</span>
<span class="t" style="left:-3.4px;top:160px;font-size:23px;letter-spacing:1px;">ces</span>
<span class="t" style="left:-0.6px;top:286px;font-size:23px;letter-spacing:0.7px;">ture</span>
</div>
<div class="ab" style="left:36px;top:0;width:2px;height:1108px;background:#a0a0a0"></div>
<div class="ab" id="win" style="left:38px;top:0;width:2504px;height:1108px;background:#f0f0f0"></div>
<div class="ab" style="left:38px;top:24px;width:2504px;height:2px;background:#696969"></div>
<svg class="ic" style="left:0;top:0" width="420" height="14"><rect x="88" y="0" width="2" height="12" fill="#8c8c8c"/><rect x="196" y="0" width="2" height="12" fill="#8c8c8c"/><rect x="258" y="0" width="2" height="12" fill="#8c8c8c"/><rect x="320" y="0" width="2" height="12" fill="#8c8c8c"/><rect x="46" y="0" width="2" height="2" fill="#000"/><rect x="48" y="0" width="2" height="2" fill="#fff"/><rect x="50" y="0" width="20" height="2" fill="#808000"/><rect x="70" y="0" width="2" height="2" fill="#000"/><rect x="46" y="2" width="4" height="2" fill="#000"/><rect x="50" y="2" width="18" height="2" fill="#808000"/><rect x="68" y="2" width="2" height="2" fill="#000"/><rect x="46" y="4" width="22" height="2" fill="#000"/><rect x="114" y="0" width="6" height="2" fill="#000"/><rect x="122" y="0" width="2" height="2" fill="#000"/><rect x="124" y="0" width="4" height="2" fill="#800000"/><rect x="128" y="0" width="2" height="2" fill="#ff0000"/><rect x="130" y="0" width="2" height="2" fill="#000"/><rect x="122" y="2" width="4" height="2" fill="#000"/><rect x="126" y="2" width="2" height="2" fill="#800000"/><rect x="128" y="2" width="4" height="2" fill="#ff0000"/><rect x="132" y="2" width="2" height="2" fill="#000"/><rect x="124" y="4" width="4" height="2" fill="#000"/><rect x="128" y="4" width="2" height="2" fill="#800000"/><rect x="130" y="4" width="2" height="2" fill="#ff0000"/><rect x="132" y="4" width="2" height="2" fill="#000"/><rect x="128" y="6" width="4" height="2" fill="#000"/><rect x="152" y="0" width="2" height="8" fill="#b4b4b4"/><rect x="168" y="0" width="2" height="8" fill="#b4b4b4"/><rect x="152" y="6" width="18" height="2" fill="#b4b4b4"/><rect x="156" y="2" width="10" height="2" fill="#b4b4b4"/><rect x="174" y="0" width="4" height="2" fill="#b4b4b4"/><rect x="176" y="2" width="4" height="2" fill="#b4b4b4"/><rect x="216" y="0" width="2" height="6" fill="#000"/><rect x="218" y="0" width="4" height="6" fill="#808000"/><rect x="222" y="0" width="12" height="6" fill="#000"/><rect x="234" y="0" width="4" height="6" fill="#fff"/><rect x="238" y="0" width="2" height="6" fill="#000"/><rect x="240" y="0" width="2" height="6" fill="#808000"/><rect x="242" y="0" width="2" height="6" fill="#000"/><rect x="218" y="6" width="26" height="2" fill="#000"/><rect x="276" y="0" width="2" height="6" fill="#a0a0a0"/><rect x="278" y="0" width="20" height="6" fill="#fff"/><rect x="298" y="0" width="2" height="6" fill="#000"/><rect x="276" y="6" width="24" height="2" fill="#000"/><rect x="280" y="2" width="4" height="2" fill="#1e90ff"/><rect x="286" y="2" width="10" height="2" fill="#1e90ff"/><rect x="346" y="0" width="2" height="2" fill="#008000"/><rect x="348" y="0" width="4" height="2" fill="#00e000"/><rect x="352" y="0" width="2" height="2" fill="#008000"/><rect x="348" y="2" width="2" height="2" fill="#008000"/><rect x="350" y="2" width="2" height="2" fill="#00e000"/><rect x="352" y="2" width="2" height="2" fill="#008000"/><rect x="350" y="4" width="2" height="2" fill="#008000"/><rect x="352" y="4" width="2" height="2" fill="#008000"/><rect x="352" y="6" width="2" height="2" fill="#008000"/><rect x="400" y="0" width="8" height="2" fill="#a0a0a0"/><rect x="400" y="2" width="6" height="2" fill="#a0a0a0"/><rect x="400" y="4" width="4" height="2" fill="#a0a0a0"/><rect x="400" y="6" width="2" height="2" fill="#a0a0a0"/></svg>
<div class="fld" style="left:114px;top:42px;width:2440px;height:40px;box-shadow:none;border-color:#7a7a7a"></div>
<span class="t" style="left:48.7px;top:49px;letter-spacing:0.181px;">Path:</span>
<span class="t" style="left:120.6px;top:47px;letter-spacing:0.120px;">OU=</span>
<span class="t cj" style="left:165.7px;top:46px">财务</span>
<span class="t" style="left:215.5px;top:47px;letter-spacing:0.153px;">,DC=test,DC=local,</span>
<span class="t" style="left:408.8px;top:47px;letter-spacing:0.105px;">&lt;default domain&gt; [DC2016.test.local]</span>
<div class="ab" id="tree" style="left:38px;top:88px;width:845px;height:1030px;border:2px solid #828790;box-sizing:border-box;background:#fff"></div>
<div class="ab" style="left:0;top:0;width:881px;height:1108px;overflow:hidden;pointer-events:none">
<div style="position:absolute;left:200px;top:636px;width:102px;height:32px;background:#f0f0f0"></div>
<div class="vd" style="left:64px;top:124px;height:8px"></div>
<div class="vd" style="left:102px;top:156px;height:8px"></div>
<div class="vd" style="left:102px;top:184px;height:620px"></div>
<div class="vd" style="left:140px;top:188px;height:456px"></div>
<div class="vd" style="left:178px;top:668px;height:8px"></div>
<svg class="ic" style="left:48px;top:92px" width="32" height="32"><use href="#i-adexp"/></svg>
<svg class="ic" style="left:92px;top:124px" width="20" height="32"><use href="#i-server"/></svg>
<div class="hd" style="left:76px;top:140px;width:10px"></div>
<div class="bx" style="left:56px;top:132px"><i class="h"></i><i class="c" style="left:-2px;top:-2px"></i><i class="c" style="left:14px;top:-2px"></i><i class="c" style="left:-2px;top:14px"></i><i class="c" style="left:14px;top:14px"></i></div>
<svg class="ic" style="left:126px;top:156px" width="30" height="30"><use href="#i-domain"/></svg>
<div class="hd" style="left:114px;top:172px;width:10px"></div>
<div class="bx" style="left:94px;top:164px"><i class="h"></i><i class="c" style="left:-2px;top:-2px"></i><i class="c" style="left:14px;top:-2px"></i><i class="c" style="left:-2px;top:14px"></i><i class="c" style="left:14px;top:14px"></i></div>
<svg class="ic" style="left:162px;top:190px" width="28" height="26"><use href="#i-gfolder"/></svg>
<div class="hd" style="left:152px;top:204px;width:10px"></div>
<div class="bx" style="left:132px;top:196px"><i class="v"></i><i class="h"></i><i class="c" style="left:-2px;top:-2px"></i><i class="c" style="left:14px;top:-2px"></i><i class="c" style="left:-2px;top:14px"></i><i class="c" style="left:14px;top:14px"></i></div>
<svg class="ic" style="left:162px;top:222px" width="28" height="26"><use href="#i-gfolder"/></svg>
<div class="hd" style="left:152px;top:236px;width:10px"></div>
<div class="bx" style="left:132px;top:228px"><i class="v"></i><i class="h"></i><i class="c" style="left:-2px;top:-2px"></i><i class="c" style="left:14px;top:-2px"></i><i class="c" style="left:-2px;top:14px"></i><i class="c" style="left:14px;top:14px"></i></div>
<svg class="ic" style="left:162px;top:254px" width="28" height="26"><use href="#i-gfolder"/></svg>
<div class="hd" style="left:152px;top:268px;width:10px"></div>
<div class="bx" style="left:132px;top:260px"><i class="v"></i><i class="h"></i><i class="c" style="left:-2px;top:-2px"></i><i class="c" style="left:14px;top:-2px"></i><i class="c" style="left:-2px;top:14px"></i><i class="c" style="left:14px;top:14px"></i></div>
<svg class="ic" style="left:162px;top:286px" width="28" height="26"><use href="#i-ou"/></svg>
<div class="hd" style="left:152px;top:300px;width:10px"></div>
<div class="bx" style="left:132px;top:292px"><i class="v"></i><i class="h"></i><i class="c" style="left:-2px;top:-2px"></i><i class="c" style="left:14px;top:-2px"></i><i class="c" style="left:-2px;top:14px"></i><i class="c" style="left:14px;top:14px"></i></div>
<svg class="ic" style="left:162px;top:318px" width="28" height="26"><use href="#i-gfolder"/></svg>
<div class="hd" style="left:152px;top:332px;width:10px"></div>
<div class="bx" style="left:132px;top:324px"><i class="v"></i><i class="h"></i><i class="c" style="left:-2px;top:-2px"></i><i class="c" style="left:14px;top:-2px"></i><i class="c" style="left:-2px;top:14px"></i><i class="c" style="left:14px;top:14px"></i></div>
<svg class="ic" style="left:164px;top:350px" width="30" height="26"><use href="#i-yfolder"/></svg>
<div class="hd" style="left:152px;top:364px;width:10px"></div>
<div class="bx" style="left:132px;top:356px"><i class="v"></i><i class="h"></i><i class="c" style="left:-2px;top:-2px"></i><i class="c" style="left:14px;top:-2px"></i><i class="c" style="left:-2px;top:14px"></i><i class="c" style="left:14px;top:14px"></i></div>
<svg class="ic" style="left:162px;top:382px" width="28" height="26"><use href="#i-gfolder"/></svg>
<div class="hd" style="left:152px;top:396px;width:10px"></div>
<div class="bx" style="left:132px;top:388px"><i class="v"></i><i class="h"></i><i class="c" style="left:-2px;top:-2px"></i><i class="c" style="left:14px;top:-2px"></i><i class="c" style="left:-2px;top:14px"></i><i class="c" style="left:14px;top:14px"></i></div>
<svg class="ic" style="left:164px;top:414px" width="30" height="26"><use href="#i-yfolder"/></svg>
<div class="hd" style="left:152px;top:428px;width:10px"></div>
<div class="bx" style="left:132px;top:420px"><i class="v"></i><i class="h"></i><i class="c" style="left:-2px;top:-2px"></i><i class="c" style="left:14px;top:-2px"></i><i class="c" style="left:-2px;top:14px"></i><i class="c" style="left:14px;top:14px"></i></div>
<svg class="ic" style="left:162px;top:446px" width="28" height="26"><use href="#i-gfolder"/></svg>
<div class="hd" style="left:152px;top:460px;width:10px"></div>
<div class="bx" style="left:132px;top:452px"><i class="v"></i><i class="h"></i><i class="c" style="left:-2px;top:-2px"></i><i class="c" style="left:14px;top:-2px"></i><i class="c" style="left:-2px;top:14px"></i><i class="c" style="left:14px;top:14px"></i></div>
<svg class="ic" style="left:164px;top:478px" width="30" height="26"><use href="#i-yfolder"/></svg>
<div class="hd" style="left:152px;top:492px;width:10px"></div>
<div class="bx" style="left:132px;top:484px"><i class="v"></i><i class="h"></i><i class="c" style="left:-2px;top:-2px"></i><i class="c" style="left:14px;top:-2px"></i><i class="c" style="left:-2px;top:14px"></i><i class="c" style="left:14px;top:14px"></i></div>
<svg class="ic" style="left:162px;top:510px" width="28" height="26"><use href="#i-gfolder"/></svg>
<div class="hd" style="left:152px;top:524px;width:10px"></div>
<div class="bx" style="left:132px;top:516px"><i class="v"></i><i class="h"></i><i class="c" style="left:-2px;top:-2px"></i><i class="c" style="left:14px;top:-2px"></i><i class="c" style="left:-2px;top:14px"></i><i class="c" style="left:14px;top:14px"></i></div>
<svg class="ic" style="left:162px;top:542px" width="28" height="26"><use href="#i-gfolder"/></svg>
<div class="hd" style="left:152px;top:556px;width:10px"></div>
<div class="bx" style="left:132px;top:548px"><i class="v"></i><i class="h"></i><i class="c" style="left:-2px;top:-2px"></i><i class="c" style="left:14px;top:-2px"></i><i class="c" style="left:-2px;top:14px"></i><i class="c" style="left:14px;top:14px"></i></div>
<svg class="ic" style="left:164px;top:574px" width="30" height="26"><use href="#i-yfolder"/></svg>
<div class="hd" style="left:152px;top:588px;width:10px"></div>
<div class="bx" style="left:132px;top:580px"><i class="v"></i><i class="h"></i><i class="c" style="left:-2px;top:-2px"></i><i class="c" style="left:14px;top:-2px"></i><i class="c" style="left:-2px;top:14px"></i><i class="c" style="left:14px;top:14px"></i></div>
<svg class="ic" style="left:162px;top:606px" width="28" height="26"><use href="#i-gfolder"/></svg>
<div class="hd" style="left:152px;top:620px;width:10px"></div>
<div class="bx" style="left:132px;top:612px"><i class="v"></i><i class="h"></i><i class="c" style="left:-2px;top:-2px"></i><i class="c" style="left:14px;top:-2px"></i><i class="c" style="left:-2px;top:14px"></i><i class="c" style="left:14px;top:14px"></i></div>
<svg class="ic" style="left:162px;top:638px" width="28" height="26"><use href="#i-ou"/></svg>
<div class="hd" style="left:152px;top:652px;width:10px"></div>
<div class="bx" style="left:132px;top:644px"><i class="h"></i><i class="c" style="left:-2px;top:-2px"></i><i class="c" style="left:14px;top:-2px"></i><i class="c" style="left:-2px;top:14px"></i><i class="c" style="left:14px;top:14px"></i></div>
<svg class="ic" style="left:206px;top:668px" width="24" height="32"><use href="#i-user"/></svg>
<div class="hd" style="left:190px;top:684px;width:10px"></div>
<div class="bx" style="left:170px;top:676px"><i class="v"></i><i class="h"></i><i class="c" style="left:-2px;top:-2px"></i><i class="c" style="left:14px;top:-2px"></i><i class="c" style="left:-2px;top:14px"></i><i class="c" style="left:14px;top:14px"></i></div>
<svg class="ic" style="left:124px;top:700px" width="32" height="28"><use href="#i-config"/></svg>
<div class="hd" style="left:114px;top:716px;width:10px"></div>
<div class="bx" style="left:94px;top:708px"><i class="v"></i><i class="h"></i><i class="c" style="left:-2px;top:-2px"></i><i class="c" style="left:14px;top:-2px"></i><i class="c" style="left:-2px;top:14px"></i><i class="c" style="left:14px;top:14px"></i></div>
<svg class="ic" style="left:126px;top:734px" width="30" height="26"><use href="#i-yfolder"/></svg>
<div class="hd" style="left:114px;top:748px;width:10px"></div>
<div class="bx" style="left:94px;top:740px"><i class="v"></i><i class="h"></i><i class="c" style="left:-2px;top:-2px"></i><i class="c" style="left:14px;top:-2px"></i><i class="c" style="left:-2px;top:14px"></i><i class="c" style="left:14px;top:14px"></i></div>
<svg class="ic" style="left:126px;top:764px" width="30" height="30"><use href="#i-domain"/></svg>
<div class="hd" style="left:114px;top:780px;width:10px"></div>
<div class="bx" style="left:94px;top:772px"><i class="v"></i><i class="h"></i><i class="c" style="left:-2px;top:-2px"></i><i class="c" style="left:14px;top:-2px"></i><i class="c" style="left:-2px;top:14px"></i><i class="c" style="left:14px;top:14px"></i></div>
<svg class="ic" style="left:126px;top:796px" width="30" height="30"><use href="#i-domain"/></svg>
<div class="hd" style="left:114px;top:812px;width:10px"></div>
<div class="bx" style="left:94px;top:804px"><i class="v"></i><i class="h"></i><i class="c" style="left:-2px;top:-2px"></i><i class="c" style="left:14px;top:-2px"></i><i class="c" style="left:-2px;top:14px"></i><i class="c" style="left:14px;top:14px"></i></div>
<span class="t" style="left:88.2px;top:93px;letter-spacing:-0.103px;">Active Directory Explorer</span>
<span class="t" style="left:128.9px;top:125px;letter-spacing:0.054px;">&lt;default domain&gt; [DC2016.test.local]</span>
<span class="t" style="left:164.8px;top:157px;letter-spacing:-0.005px;">DC=test,DC=local</span>
<span class="t" style="left:202.8px;top:189px;transform:scaleX(0.9565);">CN=Builtin</span>
<span class="t" style="left:202.8px;top:221px;transform:scaleX(0.9749);">CN=Computers</span>
<span class="t" style="left:202.8px;top:253px;letter-spacing:-0.162px;">CN=Deleted Objects</span>
<span class="t" style="left:202.8px;top:285px;transform:scaleX(0.9652);">OU=Domain Controllers</span>
<span class="t" style="left:202.8px;top:317px;transform:scaleX(0.9603);">CN=ForeignSecurityPrincipals</span>
<span class="t" style="left:202.8px;top:349px;letter-spacing:0.360px;">CN=Infrastructure</span>
<span class="t" style="left:202.8px;top:381px;transform:scaleX(0.9653);">CN=Keys</span>
<span class="t" style="left:202.8px;top:413px;transform:scaleX(0.9721);">CN=LostAndFound</span>
<span class="t" style="left:202.8px;top:445px;transform:scaleX(0.9716);">CN=Managed Service Accounts</span>
<span class="t" style="left:202.8px;top:477px;transform:scaleX(0.9473);">CN=NTDS Quotas</span>
<span class="t" style="left:202.8px;top:509px;transform:scaleX(0.9693);">CN=Program Data</span>
<span class="t" style="left:202.8px;top:541px;transform:scaleX(0.9662);">CN=System</span>
<span class="t" style="left:202.8px;top:573px;transform:scaleX(0.9349);">CN=TPM Devices</span>
<span class="t" style="left:202.8px;top:605px;transform:scaleX(0.9620);">CN=Users</span>
<span class="t" style="left:202.6px;top:637px;letter-spacing:0.870px;">OU=</span>
<span class="t cj" style="left:248.2px;top:636px">财务</span>
<span class="t" style="left:240.8px;top:669px;letter-spacing:0.488px;">CN=</span>
<span class="t cj" style="left:284.2px;top:668px">小明</span>
<span class="t" style="left:164.8px;top:701px;letter-spacing:0.010px;">CN=Configuration,DC=test,DC=local</span>
<span class="t" style="left:164.8px;top:733px;letter-spacing:-0.122px;">CN=Schema,CN=Configuration,DC=test,DC=local</span>
<span class="t" style="left:164.8px;top:765px;transform:scaleX(0.9725);">DC=DomainDnsZones,DC=test,DC=local</span>
<span class="t" style="left:164.8px;top:797px;letter-spacing:-0.164px;">DC=ForestDnsZones,DC=test,DC=local</span>
</div>
<div class="ab" id="list" style="left:894px;top:88px;width:1660px;height:1030px;border:2px solid #828790;box-sizing:border-box;background:#fff"></div>
<div class="ab" style="left:896px;top:90px;width:1646px;height:1018px;overflow:hidden"><div class="ab" style="left:-896px;top:-90px">
<div style="position:absolute;left:938px;top:208px;width:1700px;height:34px;background:#f0f0f0"></div>
<div style="position:absolute;left:1196px;top:92px;width:2px;height:48px;background:#e5e5e5"></div>
<div style="position:absolute;left:1496px;top:92px;width:2px;height:48px;background:#e5e5e5"></div>
<div style="position:absolute;left:1586px;top:92px;width:2px;height:48px;background:#e5e5e5"></div>
<svg class="ic" style="left:910px;top:140px" width="26" height="32"><use href="#i-attr"/></svg>
<svg class="ic" style="left:910px;top:174px" width="26" height="32"><use href="#i-attr"/></svg>
<svg class="ic" style="left:910px;top:208px" width="26" height="32"><use href="#i-attrsel"/></svg>
<svg class="ic" style="left:910px;top:242px" width="26" height="32"><use href="#i-attr"/></svg>
<svg class="ic" style="left:910px;top:276px" width="26" height="32"><use href="#i-attr"/></svg>
<svg class="ic" style="left:910px;top:310px" width="26" height="32"><use href="#i-attr"/></svg>
<svg class="ic" style="left:910px;top:344px" width="26" height="32"><use href="#i-attr"/></svg>
<svg class="ic" style="left:910px;top:378px" width="26" height="32"><use href="#i-attr"/></svg>
<svg class="ic" style="left:910px;top:412px" width="26" height="32"><use href="#i-attr"/></svg>
<svg class="ic" style="left:910px;top:446px" width="26" height="32"><use href="#i-attr"/></svg>
<svg class="ic" style="left:910px;top:480px" width="26" height="32"><use href="#i-attr"/></svg>
<svg class="ic" style="left:910px;top:514px" width="26" height="32"><use href="#i-attr"/></svg>
<svg class="ic" style="left:910px;top:548px" width="26" height="32"><use href="#i-attr"/></svg>
<svg class="ic" style="left:910px;top:582px" width="26" height="32"><use href="#i-attr"/></svg>
<span class="t" style="left:909.2px;top:101px;transform:scaleX(1.0447);">Attribute</span>
<span class="t" style="left:1208.2px;top:101px;letter-spacing:0.067px;">Syntax</span>
<span class="t" style="left:1508.8px;top:101px;letter-spacing:0.220px;">Count</span>
<span class="t" style="left:1598.8px;top:101px;transform:scaleX(0.9664);">Value(s)</span>
<span class="t" style="left:940.8px;top:143px;transform:scaleX(0.9492);">distinguishedName</span>
<span class="t" style="left:1208.2px;top:143px;transform:scaleX(0.8999);">DN</span>
<span class="t" style="left:1511.2px;top:143px;">1</span>
<span class="t" style="left:1598.9px;top:143px;letter-spacing:0.170px;">OU=</span>
<span class="t cj" style="left:1643.7px;top:142px">财务</span>
<span class="t" style="left:1693.1px;top:143px;letter-spacing:0.107px;">,DC=test,DC=local</span>
<span class="t" style="left:940.8px;top:177px;transform:scaleX(0.9661);">dSCorePropagationData</span>
<span class="t" style="left:1208.2px;top:177px;transform:scaleX(0.9334);">GeneralizedTime</span>
<span class="t" style="left:1511.2px;top:177px;">3</span>
<span class="t" style="left:1598.8px;top:177px;letter-spacing:0.350px;">2020/4/8 16:05:39;2020/4/8 16:05:39;1601/1/1 8:00:00</span>
<span class="t" style="left:940.8px;top:211px;transform:scaleX(0.9066);">gPLink</span>
<span class="t" style="left:1208.2px;top:211px;letter-spacing:-0.135px;">DirectoryString</span>
<span class="t" style="left:1511.2px;top:211px;">1</span>
<span class="t" style="left:1600.2px;top:211px;letter-spacing:-0.189px;">[LDAP://</span>
<span class="t" style="left:1681.2px;top:211px;transform:scaleX(1.1188);">cn={</span>
<span class="t" style="left:1729.2px;top:211px;transform:scaleX(0.9568);">CF20808F-51F6-44C5-8FD5-750DE7144D29}</span>
<span class="t" style="left:2164.2px;top:211px;letter-spacing:0.139px;">,cn=policies,cn=system,</span>
<span class="t" style="left:2401.6px;top:211px;letter-spacing:0.057px;">DC=test,DC=local;0]</span>
<span class="t" style="left:940.8px;top:245px;letter-spacing:-0.186px;">instanceType</span>
<span class="t" style="left:1208.2px;top:245px;transform:scaleX(1.0453);">Integer</span>
<span class="t" style="left:1511.2px;top:245px;">1</span>
<span class="t" style="left:1598.8px;top:245px;">4</span>
<span class="t" style="left:940.8px;top:279px;transform:scaleX(0.9374);">name</span>
<span class="t" style="left:1208.2px;top:279px;letter-spacing:-0.135px;">DirectoryString</span>
<span class="t" style="left:1511.2px;top:279px;">1</span>
<span class="t cj" style="left:1598.2px;top:278px">财务</span>
<span class="t" style="left:940.8px;top:313px;transform:scaleX(0.9713);">nTSecurityDescriptor</span>
<span class="t" style="left:1208.2px;top:313px;transform:scaleX(0.9620);">NTSecurityDescriptor</span>
<span class="t" style="left:1511.2px;top:313px;">1</span>
<span class="t" style="left:1598.8px;top:313px;letter-spacing:-0.054px;">D:AI(D;;DTSD;;;WD)(OA;;CCDC;4828cc14-1437-45bc-9b07-ad6f015e5f28;;AO)(OA;;CCDC;bf967a86-0de6-11d0-a285-00aa003049e2;;AO)</span>
<span class="t" style="left:940.8px;top:347px;">objectCategory</span>
<span class="t" style="left:940.8px;top:381px;">objectClass</span>
<span class="t" style="left:940.8px;top:415px;">objectGUID</span>
<span class="t" style="left:940.8px;top:449px;letter-spacing:0.516px;">ou</span>
<span class="t" style="left:940.8px;top:483px;">uSNChanged</span>
<span class="t" style="left:940.8px;top:517px;">uSNCreated</span>
<span class="t" style="left:940.8px;top:551px;">whenChanged</span>
<span class="t" style="left:940.8px;top:585px;">whenCreated</span>
</div></div>
<div class="ab" id="dlg" style="left:972px;top:332px;width:1356px;height:734px;border:2px solid #0078d7;box-sizing:border-box;background:#f0f0f0;overflow:hidden"><div class="ab" style="left:-974px;top:-334px">
<div class="ab" style="left:974px;top:334px;width:1352px;height:60px;background:#fff"></div>
<svg class="ab" style="left:988px;top:344px" width="36" height="28" viewBox="988 344 36 28"><defs><linearGradient id="gl" x1="0" x2="1" y1="0" y2="0"><stop offset="0" stop-color="#fff27c"/><stop offset=".45" stop-color="#ffd968"/><stop offset="1" stop-color="#ffe585"/></linearGradient><linearGradient id="gr" x1="0" x2="1" y1="0" y2="0"><stop offset="0" stop-color="#e9b62e"/><stop offset=".3" stop-color="#ffe98a"/><stop offset=".6" stop-color="#fffdf0"/><stop offset="1" stop-color="#ffee55"/></linearGradient></defs><path d="M1017 348 L1019 348 L1019 352 L1021 352 L1021 356 L1023 356 L1023 363 L1015 366.5 L1012 369 L996 370 L996 366 Z" fill="#5c5c5c"/><path d="M990 348 L1004 349.5 L1008.5 365 L1008 367.5 L994.5 368 Z" fill="url(#gl)"/><path d="M994 364.5 L1008 363.5 L1008 367.5 L994.5 368 Z" fill="#d3a021"/><path d="M1004 350 L1008 346 L1016.5 346 L1020.5 361 L1014 364 L1008.5 367 Z" fill="url(#gr)"/><path d="M1004 350 L1006.5 349 L1011 366 L1008.5 367.5 Z" fill="#cf9c20"/><path d="M1011 362 L1020.5 359.5 L1020.5 361.5 L1011 366 Z" fill="#dba82a"/><path d="M990 348 L998 348.2 L998 350 L990.3 350 Z" fill="#e6b838"/><path d="M1008 346 L1016.5 346 L1016.5 347.5 L1008 347.5 Z" fill="#e9c23f"/></svg>
<svg class="ab" style="left:2284px;top:350px" width="24" height="24" viewBox="0 0 24 24"><path d="M2 2 L22 22 M22 2 L2 22" stroke="#000" stroke-width="2" fill="none"/></svg>
<div class="fld" style="left:1158px;top:414px;width:1148px;height:40px"></div>
<div class="fld" style="left:1158px;top:468px;width:1148px;height:40px;border-color:#000"></div>
<div class="fld" style="left:1158px;top:524px;width:1148px;height:40px"></div>
<div class="fld" style="left:1158px;top:580px;width:1052px;height:40px"></div>
<div class="ab" style="left:2220px;top:578px;width:84px;height:42px;box-sizing:border-box;border:2px solid #adadad;background:#e1e1e1"></div>
<div class="fld" style="left:992px;top:696px;width:1314px;height:274px"></div>
<div class="ab" style="left:996px;top:931px;width:1274px;height:2px;background:#fff"></div>
<div class="ab" style="left:2268px;top:700px;width:2px;height:233px;background:#fff"></div>
<svg class="ab" style="left:974px;top:334px" width="1352" height="730" viewBox="974 334 1352 730" fill="none" stroke="#bfbfbf" stroke-width="4"><path d="M2279 722 L2285 716 L2291 722"/><path d="M2279 912 L2285 918 L2291 912"/><path d="M1016.5 943.5 L1009.5 949 L1016.5 954.5"/><path d="M2248 943.5 L2255 949 L2248 954.5"/></svg>
<div class="ab" style="left:2158px;top:1000px;width:146px;height:42px;box-sizing:border-box;border:4px solid #0078d7;background:#e1e1e1"></div>
<div class="ab" style="left:2316px;top:1044px;width:4px;height:4px;background:#bfbfbf"></div>
<div class="ab" style="left:2310px;top:1050px;width:4px;height:4px;background:#bfbfbf"></div>
<div class="ab" style="left:2316px;top:1050px;width:4px;height:4px;background:#bfbfbf"></div>
<div class="ab" style="left:2304px;top:1056px;width:4px;height:4px;background:#bfbfbf"></div>
<div class="ab" style="left:2310px;top:1056px;width:4px;height:4px;background:#bfbfbf"></div>
<div class="ab" style="left:2316px;top:1056px;width:4px;height:4px;background:#bfbfbf"></div>
<span class="t" style="left:1031.2px;top:348px;font-size:24px;transform:scaleX(1.1176);">Attribute Properties</span>
<span class="t" style="left:991.2px;top:418px;font-size:24px;transform:scaleX(0.8860);">Attribute:</span>
<span class="t" style="left:991.2px;top:474px;font-size:24px;transform:scaleX(0.9023);">Object:</span>
<span class="t" style="left:991.2px;top:528px;font-size:24px;transform:scaleX(0.8757);">Syntax:</span>
<span class="t" style="left:991.2px;top:584px;font-size:24px;transform:scaleX(0.8900);">Schema:</span>
<span class="t" style="left:1164.2px;top:418px;font-size:24px;transform:scaleX(0.9129);">gPLink</span>
<span class="t" style="left:1164.0px;top:472px;font-size:24px;transform:scaleX(0.9297);">OU=</span>
<span class="t cj" style="left:1208.2px;top:472px">财务</span>
<span class="t" style="left:1257.2px;top:472px;font-size:24px;transform:scaleX(0.8785);">,DC=test,DC=local</span>
<span class="t" style="left:1164.5px;top:528px;font-size:24px;transform:scaleX(0.8726);">DirectoryString</span>
<span class="t" style="left:1164.2px;top:584px;font-size:24px;transform:scaleX(0.8757);">CN=GP-Link,CN=Schema,CN=Configuration,DC=test,DC=local</span>
<span class="t" style="left:991.7px;top:658px;font-size:24px;transform:scaleX(0.9006);">Values:</span>
<span class="t" style="left:997.5px;top:700px;font-size:24px;transform:scaleX(0.9488);">[LDAP://</span>
<span class="t" style="left:1085.6px;top:700px;font-size:24px;transform:scaleX(0.9538);">cn={</span>
<span class="t" style="left:1130.4px;top:700px;font-size:24px;transform:scaleX(0.8752);">CF20808F-51F6-44C5-8FD5-750DE7144D29}</span>
<span class="t" style="left:1564.9px;top:700px;font-size:24px;transform:scaleX(0.8670);">,cn=policies,cn=system,</span>
<span class="t" style="left:1787.2px;top:700px;font-size:24px;transform:scaleX(0.8749);">DC=test,DC=local;0]</span>
<span class="t" style="left:2234.2px;top:584px;font-size:24px;transform:scaleX(0.8960);">Go to</span>
<span class="t" style="left:2213.9px;top:1006px;font-size:24px;transform:scaleX(0.9658);">OK</span>
<svg class="ab" style="left:1170px;top:420px" width="26" height="48" viewBox="1170 420 26 48"><g fill="#f0f0f0"><rect x="1179" y="424" width="8" height="26"/></g><g fill="#000"><rect x="1182" y="426" width="2" height="36"/><rect x="1176" y="424" width="6" height="2"/><rect x="1184" y="424" width="6" height="2"/><rect x="1176" y="462" width="14" height="2"/></g></svg>
</div></div>
</body></html>
